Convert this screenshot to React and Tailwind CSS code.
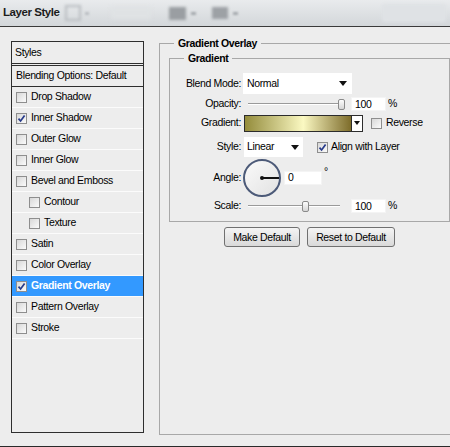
import React from "react";

const styleRows = [
  { label: "Drop Shadow" },
  { label: "Inner Shadow", checked: true },
  { label: "Outer Glow" },
  { label: "Inner Glow" },
  { label: "Bevel and Emboss" },
  { label: "Contour", indent: true },
  { label: "Texture", indent: true },
  { label: "Satin" },
  { label: "Color Overlay" },
  { label: "Gradient Overlay", checked: true, active: true },
  { label: "Pattern Overlay" },
  { label: "Stroke" },
];

function CheckBox({ checked }) {
  return (
    <span className="w-[11px] h-[11px] shrink-0 border border-[#8e8e8e] bg-linear-to-br from-[#d8d8d8] to-[#fbfbfb] flex items-center justify-center">
      {checked && (
        <svg width="9" height="9" viewBox="0 0 9 9">
          <path d="M1.5 4.6 L3.6 7 L7.6 1.4" stroke="#263a8a" strokeWidth="1.7" fill="none" />
        </svg>
      )}
    </span>
  );
}

function Arrow() {
  return (
    <svg width="8" height="5" viewBox="0 0 8 5" className="shrink-0">
      <polygon points="0,0 8,0 4,5" fill="#111" />
    </svg>
  );
}

function Label({ children }) {
  return <span className="w-[71px] shrink-0 text-right">{children}</span>;
}

function Field({ value, width = "w-[35px]" }) {
  return (
    <span className={`${width} h-[14px] bg-white border border-[#f4f4f4] flex items-center pl-[3px] leading-none`}>
      {value}
    </span>
  );
}

function Thumb() {
  return <span className="w-[7px] h-[11px] shrink-0 rounded-[2px] border border-[#8a8a8a] bg-linear-to-b from-[#fdfdfd] to-[#d6d6d6]" />;
}

function Track({ w }) {
  return <span className={`${w} h-[2px] border-t border-[#9a9a9a] border-b border-b-white`} />;
}

function TitleBar() {
  return (
    <div className="h-[27px] shrink-0 border-b border-[#3a3a3a] bg-linear-to-b from-[#e9ebed] to-[#d3d7da] flex items-center">
      <span className="ml-[3px] w-[59px] text-[11.5px] font-bold text-[#1c1c1c] tracking-[-0.45px]">Layer Style</span>
      <span className="ml-[3px] w-[16px] h-[16px] border-2 border-[#b9bdc1] blur-[1.5px]" />
      <span className="ml-[4px] w-[4px] h-[3px] bg-[#b9bdc1] blur-[1px]" />
      <span className="ml-[22px] w-[40px] h-[12px] bg-[#dfe2e4] blur-[2px]" />
      <span className="ml-[18px] w-[17px] h-[13px] bg-[#9a9ea2] blur-[1.5px]" />
      <span className="ml-[5px] w-[5px] h-[3px] bg-[#a5a9ad] blur-[1px]" />
      <span className="ml-[16px] w-[16px] h-[12px] bg-[#9da1a5] blur-[1.5px]" />
      <span className="ml-[5px] w-[5px] h-[3px] bg-[#a5a9ad] blur-[1px]" />
      <span className="ml-auto mr-[4px] w-[64px] h-[18px] rounded-[3px] bg-[#dfe2e5] blur-[1.5px]" />
    </div>
  );
}

function StylesPanel() {
  return (
    <div className="mt-[4px] w-[133px] h-[392px] shrink-0 border border-[#2e2e2e] bg-[#ededed] flex flex-col">
      <div className="h-[24px] shrink-0 flex items-center pl-[3px] border-b-[3px] border-double border-[#2e2e2e]">Styles</div>
      <div className="h-[21px] shrink-0 flex items-center pl-[4px] border-b border-[#2e2e2e]">Blending Options: Default</div>
      {styleRows.map((row) => (
        <div
          key={row.label}
          className={`h-[21px] shrink-0 flex items-center gap-[4px] border-b border-[#fbfbfb] ${row.indent ? "pl-[17px]" : "pl-[4px]"} ${
            row.active ? "bg-[#3399ff] text-white font-bold" : ""
          }`}
        >
          <CheckBox checked={row.checked} />
          <span>{row.label}</span>
        </div>
      ))}
    </div>
  );
}

function GradientOverlay() {
  return (
    <fieldset className="w-[300px] h-[398px] shrink-0 border border-[#a8a8a8] pl-[9px] pt-[2px]">
      <legend className="ml-[5px] px-[4px] font-bold leading-[13px]">Gradient Overlay</legend>
      <fieldset className="w-[281px] border border-[#a8a8a8] pb-[6px]">
        <legend className="ml-[14px] px-[4px] font-bold leading-[13px]">Gradient</legend>

        <div className="flex items-center h-[21px] mt-[8px]">
          <Label>Blend Mode:</Label>
          <span className="ml-[2px] w-[109px] h-[21px] bg-white flex items-center pl-[4px] pr-[5px] justify-between">
            Normal
            <Arrow />
          </span>
        </div>

        <div className="flex items-center h-[20px]">
          <Label>Opacity:</Label>
          <span className="ml-[7px] w-[103px] flex items-center">
            <Track w="w-[90px]" />
            <Thumb />
          </span>
          <Field value="100" />
          <span className="ml-[2px]">%</span>
        </div>

        <div className="flex items-center h-[18px]">
          <Label>Gradient:</Label>
          <span className="ml-[3px] w-[119px] h-[17px] border border-[#2c2c2c] flex">
            <span className="flex-1 bg-linear-to-r from-[#948c3a] via-[#fbf9c2] via-55% to-[#7e6d2a]" />
            <span className="w-[11px] border-l border-[#2c2c2c] bg-white flex items-center justify-center">
              <svg width="6" height="4" viewBox="0 0 6 4">
                <polygon points="0,0 6,0 3,4" fill="#111" />
              </svg>
            </span>
          </span>
          <span className="ml-[8px] flex items-center gap-[4px]">
            <CheckBox />
            Reverse
          </span>
        </div>

        <div className="flex items-center h-[22px] mt-[4px]">
          <Label>Style:</Label>
          <span className="ml-[3px] w-[59px] h-[20px] bg-white flex items-center pl-[3px] pr-[4px] justify-between">
            Linear
            <Arrow />
          </span>
          <span className="ml-[14px] flex items-center gap-[3px]">
            <CheckBox checked />
            Align with Layer
          </span>
        </div>

        <div className="flex items-center h-[39px]">
          <Label>Angle:</Label>
          <span className="ml-[2px] w-[38px] h-[38px] rounded-full border-2 border-[#4c5a78] bg-linear-to-br from-[#fafafa] to-[#e2e2e2] flex items-center justify-end">
            <span className="w-[18px] h-[2px] bg-[#111] flex items-center">
              <span className="w-[4px] h-[4px] -ml-[1px] rounded-full bg-[#111]" />
            </span>
          </span>
          <span className="ml-[3px]">
            <Field value="0" width="w-[38px]" />
          </span>
          <span className="ml-[2px] self-start mt-[8px] leading-none">°</span>
        </div>

        <div className="flex items-center h-[18px]">
          <Label>Scale:</Label>
          <span className="ml-[7px] w-[103px] flex items-center">
            <Track w="w-[54px]" />
            <Thumb />
            <Track w="w-[31px]" />
          </span>
          <Field value="100" />
          <span className="ml-[2px]">%</span>
        </div>
      </fieldset>

      <div className="flex gap-[7px] ml-[55px] mt-[5px]">
        <button className="w-[76px] h-[20px] rounded-[3px] border border-[#707070] bg-linear-to-b from-[#f4f4f4] to-[#d9d9d9] leading-none">
          Make Default
        </button>
        <button className="w-[88px] h-[20px] rounded-[3px] border border-[#707070] bg-linear-to-b from-[#f4f4f4] to-[#d9d9d9] leading-none">
          Reset to Default
        </button>
      </div>
    </fieldset>
  );
}

export default function App() {
  return (
    <div className="w-[450px] h-[447px] overflow-hidden bg-[#ededed] flex flex-col font-['Liberation_Sans',Arial,sans-serif] text-[10.5px] tracking-[-0.35px] text-black border-b border-[#2a2a2a]">
      <TitleBar />
      <div className="flex-1 flex items-start pl-[11px] pt-[10px] gap-[15px] overflow-hidden">
        <StylesPanel />
        <GradientOverlay />
      </div>
    </div>
  );
}
